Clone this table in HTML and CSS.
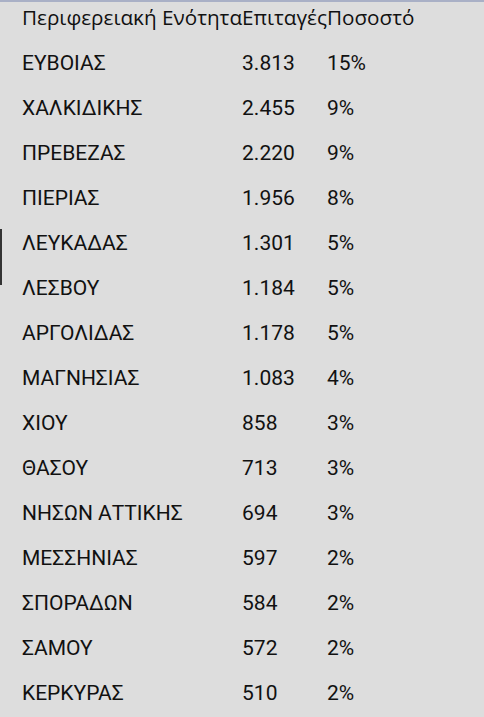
FILE: index.html
```html
<!DOCTYPE html>
<html lang="el">
<head>
<meta charset="utf-8">
<link rel="stylesheet" href="styles.css">
</head>
<body>
<div class="panel">
  <span class="edge-mark"></span>
  <table class="stats">
    <thead>
      <tr><th>Περιφερειακή Ενότητα</th><th>Επιταγές</th><th>Ποσοστό</th></tr>
    </thead>
    <tbody>
      <tr><td>ΕΥΒΟΙΑΣ</td><td>3.813</td><td>15%</td></tr>
      <tr><td>ΧΑΛΚΙΔΙΚΗΣ</td><td>2.455</td><td>9%</td></tr>
      <tr><td>ΠΡΕΒΕΖΑΣ</td><td>2.220</td><td>9%</td></tr>
      <tr><td>ΠΙΕΡΙΑΣ</td><td>1.956</td><td>8%</td></tr>
      <tr><td>ΛΕΥΚΑΔΑΣ</td><td>1.301</td><td>5%</td></tr>
      <tr><td>ΛΕΣΒΟΥ</td><td>1.184</td><td>5%</td></tr>
      <tr><td>ΑΡΓΟΛΙΔΑΣ</td><td>1.178</td><td>5%</td></tr>
      <tr><td>ΜΑΓΝΗΣΙΑΣ</td><td>1.083</td><td>4%</td></tr>
      <tr><td>ΧΙΟΥ</td><td>858</td><td>3%</td></tr>
      <tr><td>ΘΑΣΟΥ</td><td>713</td><td>3%</td></tr>
      <tr><td>ΝΗΣΩΝ ΑΤΤΙΚΗΣ</td><td>694</td><td>3%</td></tr>
      <tr><td>ΜΕΣΣΗΝΙΑΣ</td><td>597</td><td>2%</td></tr>
      <tr><td>ΣΠΟΡΑΔΩΝ</td><td>584</td><td>2%</td></tr>
      <tr><td>ΣΑΜΟΥ</td><td>572</td><td>2%</td></tr>
      <tr><td>ΚΕΡΚΥΡΑΣ</td><td>510</td><td>2%</td></tr>
    </tbody>
  </table>
</div>
</body>
</html>
```
FILE: styles.css
```css
html, body {
  margin: 0;
  padding: 0;
  background: #dddddd;
}
.panel {
  position: relative;
  min-height: 717px;
  box-sizing: border-box;
  border-top: 2px solid #a9b0c6;
  padding-left: 22px;
  color: #111111;
}
.edge-mark {
  position: absolute;
  left: 0;
  top: 227px;
  width: 2px;
  height: 56px;
  background: #333333;
}
.stats {
  border-collapse: collapse;
  border-spacing: 0;
}
.stats th {
  font-family: "Open Sans", "Noto Sans", sans-serif;
  font-weight: normal;
  font-size: 20.7px;
  text-align: left;
  padding: 1px 0 0 0;
  height: 37px;
  vertical-align: top;
  line-height: 28px;
  white-space: nowrap;
}
.stats td {
  font-family: Roboto, "Liberation Sans", sans-serif;
  font-size: 21px;
  height: 45px;
  padding: 0;
  vertical-align: middle;
  line-height: 24px;
  white-space: nowrap;
}
```
